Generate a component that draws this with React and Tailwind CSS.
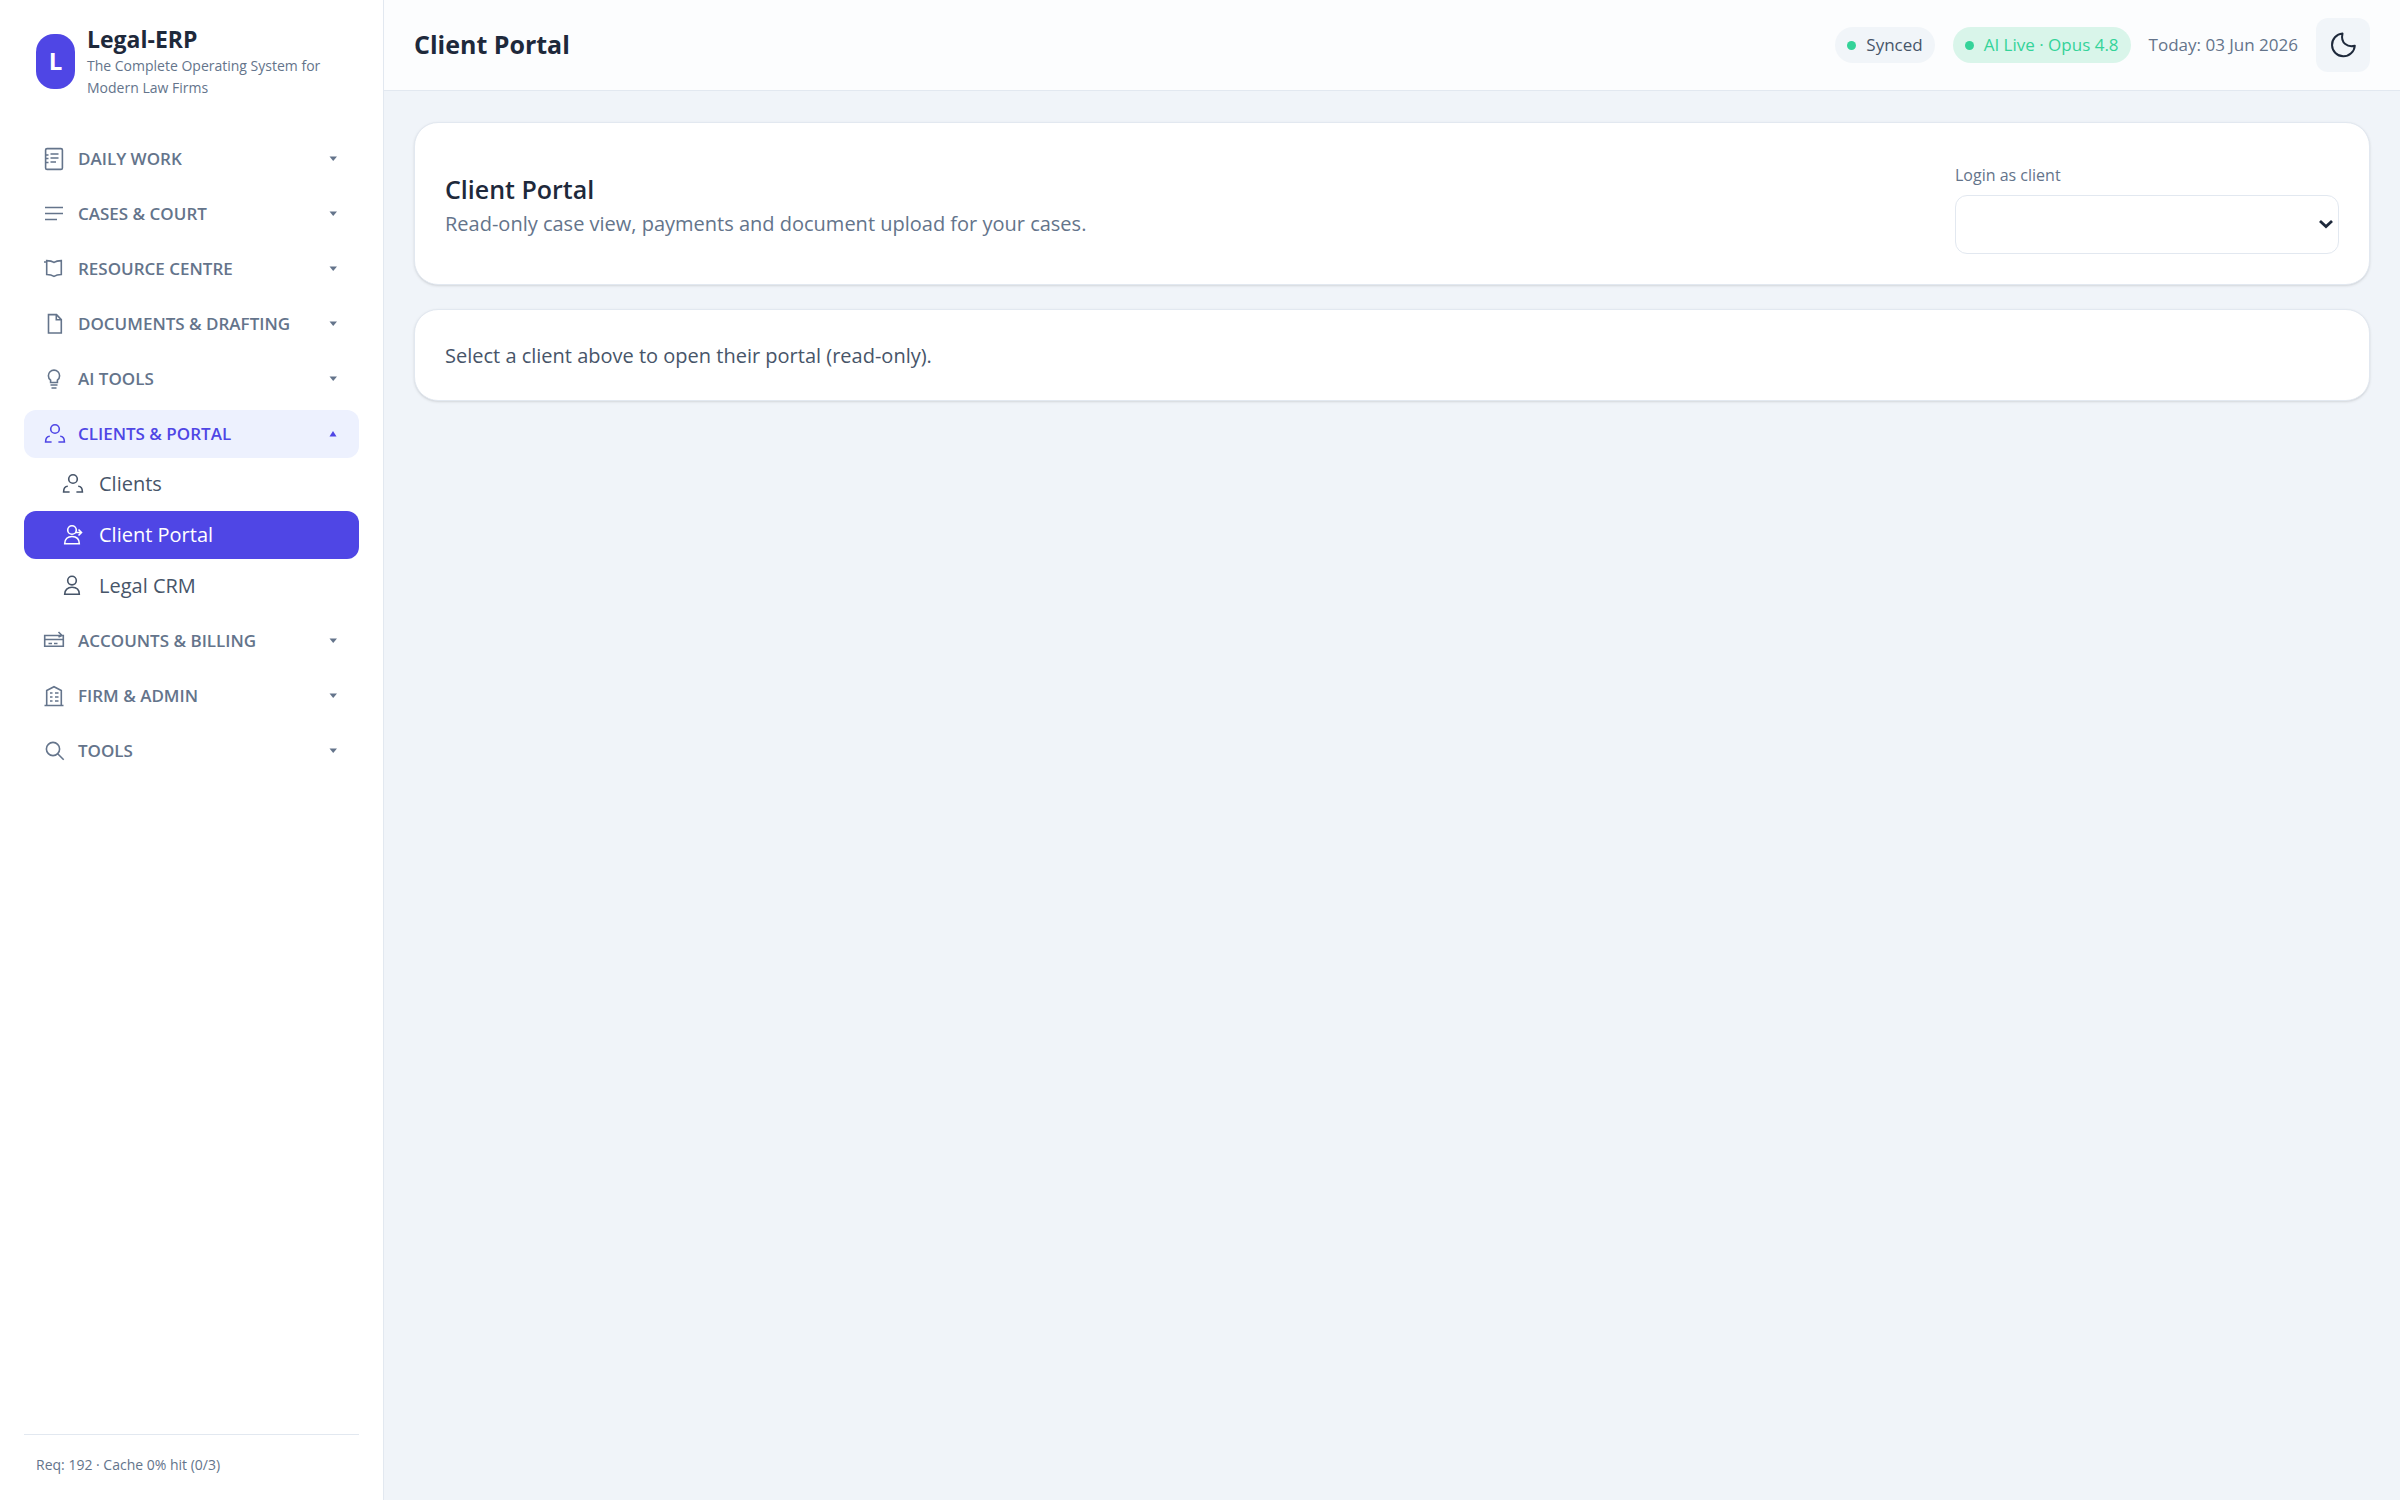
import { useState } from "react";
import clsx from "clsx";

const ICONS = {
  notebook: (
    <>
      <rect x="3.6" y="1.6" width="16.8" height="20.8" rx="1.5" />
      <path d="M8.5 7h8M8.5 11h8M8.5 15h5.5M3 8h3.5M3 11.5h3.5M3 15.5h3.5" />
    </>
  ),
  lines: <path d="M3 5.5h18M3 11.500h18M3 17.500h12" />,
  book: <path d="M2 5h3M4.700 3.600c3 0 5.300.4 7.300 1.800 2-1.400 4.300-1.800 7.300-1.800V17.500c-3 0-5.300.5-7.300 1.800-2-1.300-4.300-1.800-7.300-1.800z" />,
  file: <path d="M6.500 2.600h8l4.800 5V21H6.500zM14.300 2.600v5.200h5" />,
  bulb: <path d="M8.600 15.500v-2.300C7 12 6.400 10.500 6.400 8.700a5.600 5.600 0 0 1 11.200 0c0 1.800-.6 3.300-2.200 4.500v2.300zM8.500 18h7M9.500 21h5" />,
  group: (
    <>
      <circle cx="13" cy="7" r="4.300" />
      <path d="M7.800 14.200c-2.600 0-4.200 2.300-4.200 5.800h6M18.200 14.200c2.600 0 4.200 2.300 4.200 5.800h-6" />
    </>
  ),
  userArrow: (
    <>
      <circle cx="12" cy="7" r="4.300" />
      <path d="M4.700 20.800c0-5 3-7.300 7.300-7.300s7.300 2.300 7.300 7.300zM15 9.500h6.500M18.500 6.500l3 3-3 3" />
    </>
  ),
  user: (
    <>
      <circle cx="12" cy="6.600" r="4.300" />
      <path d="M4.700 20.300c0-4.700 3-7 7.300-7s7.300 2.300 7.300 7z" />
    </>
  ),
  card: <path d="M2.700 6.500h18.600v10.800H2.700zM2.700 10.500h18.600M6.500 14.500h3.500M12 14.500h3.500M16.500 3l3.500 3.500-3.500 1.500" />,
  building: (
    <>
      <path d="M2.500 21.500h19M4.700 21.500V6.500L12 2.700l7.300 3.800v15" />
      <path d="M8 9h2.500M13 9h3.500M8 13h2.500M13 13h3.500M8 17h2.500M13 17h3.500" />
    </>
  ),
  search: (
    <>
      <circle cx="11" cy="10" r="6.600" />
      <path d="M15.700 14.800l6 6" />
    </>
  ),
};

const NAV = [
  { label: "Daily Work", icon: "notebook" },
  { label: "Cases & Court", icon: "lines" },
  { label: "Resource Centre", icon: "book" },
  { label: "Documents & Drafting", icon: "file" },
  { label: "AI Tools", icon: "bulb" },
  {
    label: "Clients & Portal",
    icon: "group",
    items: [
      { label: "Clients", icon: "group" },
      { label: "Client Portal", icon: "userArrow" },
      { label: "Legal CRM", icon: "user" },
    ],
  },
  { label: "Accounts & Billing", icon: "card" },
  { label: "Firm & Admin", icon: "building" },
  { label: "Tools", icon: "search" },
];

function Icon({ name }) {
  return (
    <svg viewBox="0 0 24 24" className="size-6 shrink-0" fill="none" stroke="currentColor" strokeWidth="1.600" aria-hidden="true">
      {ICONS[name]}
    </svg>
  );
}

function Caret({ open }) {
  return (
    <svg viewBox="0 0 8 6" className="ml-auto h-[6px] w-2 shrink-0" fill="currentColor" aria-hidden="true">
      <path d={open ? "M4 0L7.500 5.500H0.500z" : "M0.500 0.500h7.500L4.200 5z"} />
    </svg>
  );
}

function NavGroup({ group, open, onToggle }) {
  return (
    <div>
      <button
        type="button"
        aria-expanded={open}
        onClick={onToggle}
        className={clsx(
          "flex h-12 w-full items-center gap-3 rounded-xl pl-[18px] pr-[22px] text-[17px] font-semibold uppercase",
          open ? "bg-[#edf1fe] text-[#4f46e5]" : "text-[#64748b] hover:bg-[#f8fafc]"
        )}
      >
        <Icon name={group.icon} />
        {group.label}
        <Caret open={open} />
      </button>
      {open && group.items && (
        <div className="mt-[2px] flex flex-col gap-[3px]">
          {group.items.map((item) => {
            const active = item.label === "Client Portal";
            return (
              <a
                key={item.label}
                href="#"
                className={clsx(
                  "flex h-12 items-center gap-[15px] rounded-xl pl-9 text-xl",
                  active ? "bg-[#4f46e5] text-white" : "text-[#475569] hover:bg-[#f8fafc]"
                )}
              >
                <Icon name={item.icon} />
                {item.label}
              </a>
            );
          })}
        </div>
      )}
    </div>
  );
}

function Sidebar() {
  const [openGroup, setOpenGroup] = useState("Clients & Portal");

  return (
    <aside className="flex w-[384px] shrink-0 flex-col border-r border-[#e2e8f0] bg-white px-6">
      <div className="flex items-center gap-3 px-3 pt-[23px]">
        <div className="flex h-[55px] w-[39px] shrink-0 items-center justify-center rounded-[18px] bg-[#4f46e5] text-2xl font-bold text-white">
          L
        </div>
        <div>
          <div className="text-[23px] leading-8 font-bold text-[#1e293b]">Legal-ERP</div>
          <div className="text-sm leading-[22px] text-[#64748b]">The Complete Operating System for Modern Law Firms</div>
        </div>
      </div>

      <nav className="mt-9 flex flex-1 flex-col gap-[7px]">
        {NAV.map((g) => (
          <NavGroup
            key={g.label}
            group={g}
            open={openGroup === g.label}
            onToggle={() => setOpenGroup(openGroup === g.label ? "" : g.label)}
          />
        ))}
      </nav>

      <div className="border-t border-[#e2e8f0] px-3 pt-[19px] pb-6 text-sm leading-[22px] text-[#64748b]">
        Req: 192 · Cache 0% hit (0/3)
      </div>
    </aside>
  );
}

function Pill({ className, children }) {
  return (
    <span className={clsx("flex h-9 items-center gap-[10px] rounded-full px-3", className)}>
      <span className="size-[9px] rounded-full bg-[#34d399]" />
      {children}
    </span>
  );
}

function Header() {
  return (
    <header className="flex h-[91px] items-center border-b border-[#e2e8f0] bg-[#fcfdfe] px-[30px]">
      <h1 className="text-[25px] font-bold text-[#1e293b]">Client Portal</h1>
      <div className="ml-auto flex items-center gap-[18px] text-[17px]">
        <Pill className="bg-[#f1f5f9] text-[#475569]">Synced</Pill>
        <Pill className="bg-[#d9f5ea] text-[#34d399]">AI Live · Opus 4.8</Pill>
        <span className="text-[#64748b]">Today: 03 Jun 2026</span>
        <button
          type="button"
          aria-label="Toggle dark mode"
          className="flex size-[54px] items-center justify-center rounded-xl bg-[#f1f5f9] text-[#1e293b]"
        >
          <svg viewBox="0 0 30 30" className="size-[30px]" fill="none" stroke="currentColor" strokeWidth="2" strokeLinejoin="round">
            <path d="M14.500 3.500a11.400 11.400 0 1 0 12.300 12.200C20 17.500 12.200 13.500 14.500 3.500z" />
          </svg>
        </button>
      </div>
    </header>
  );
}

export default function App() {
  return (
    <div className="flex min-h-screen bg-[#f0f4f9] font-['Open_Sans',sans-serif]">
      <Sidebar />
      <div className="flex min-w-0 flex-1 flex-col">
        <Header />
        <main className="flex flex-col gap-6 px-[30px] py-[31px]">
          <section className="flex items-center justify-between rounded-3xl border border-[#e2e8f0] bg-white p-[30px] shadow-sm">
            <div className="pt-1">
              <h2 className="text-[25px] leading-9 font-semibold text-[#1e293b]">Client Portal</h2>
              <p className="text-xl leading-[34px] text-[#64748b]">
                Read-only case view, payments and document upload for your cases.
              </p>
            </div>
            <div className="flex w-[384px] flex-col pt-[10px]">
              <label htmlFor="client" className="mb-2 text-base leading-6 text-[#64748b]">
                Login as client
              </label>
              <div className="relative">
                <select
                  id="client"
                  className="h-[59px] w-full appearance-none rounded-xl border border-[#e2e8f0] bg-white px-4 text-xl text-[#1e293b]"
                />
                <svg
                  viewBox="0 0 14 10"
                  className="pointer-events-none absolute top-6 right-[6px] h-[10px] w-[14px]"
                  fill="none"
                  stroke="#1e293b"
                  strokeWidth="2.800"
                  aria-hidden="true"
                >
                  <path d="M1 2l6 5.500L13 2" />
                </svg>
              </div>
            </div>
          </section>

          <section className="rounded-3xl border border-[#e2e8f0] bg-white px-[30px] pt-[31px] pb-[29px] text-xl leading-[30px] text-[#475569] shadow-sm">
            Select a client above to open their portal (read-only).
          </section>
        </main>
      </div>
    </div>
  );
}
